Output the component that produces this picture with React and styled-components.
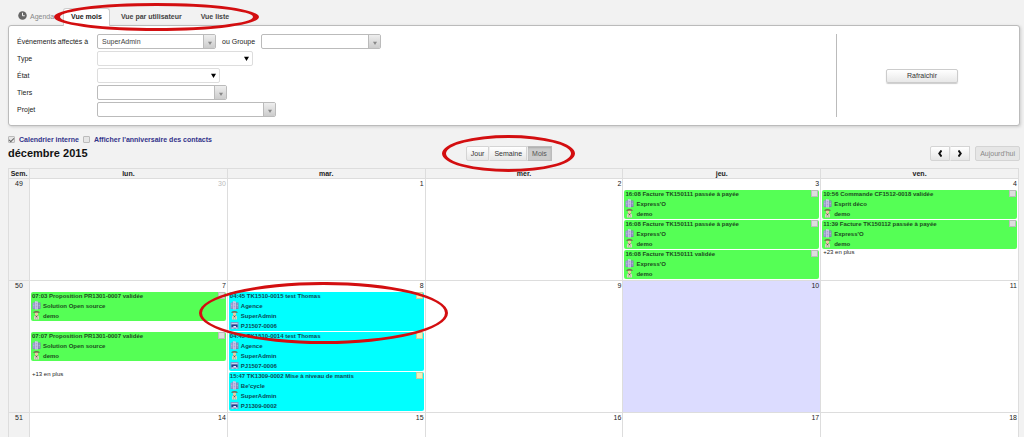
import React from 'react';
import styled, { createGlobalStyle, css } from 'styled-components';

const GlobalStyle = createGlobalStyle`
  * {
    box-sizing: border-box;
  }

  body {
    margin: 0;
    background-color: #f2f2f2;
    color: #222222;
    font-family: 'Liberation Sans', Arial, sans-serif;
    font-size: 7px;
    line-height: 10px;
  }

  button, select, input {
    margin: 0;
    font-family: inherit;
    font-size: inherit;
    line-height: inherit;
  }
`;

const Page = styled.main`
  padding: 8px 4px 0 8px;
`;

const Tabs = styled.nav`
  position: relative;
  z-index: 1;
  display: flex;
  align-items: center;
  gap: 3px;
  margin-bottom: -1px;
  padding-left: 10px;
`;

const TabsTitle = styled.span`
  display: flex;
  align-items: center;
  gap: 3px;
  width: 42px;
  color: #888888;

  svg {
    width: 9px;
    height: 9px;
    margin-bottom: 3px;
  }
`;

const Tab = styled.a`
  height: 18px;
  padding: 3px 7px;
  border: 1px solid transparent;
  border-bottom: 0;
  border-radius: 3px 3px 0 0;
  color: #444444;
  font-weight: bold;
  text-decoration: none;

  ${({ $active }) =>
    $active &&
    css`
      background-color: #ffffff;
      border-color: #cccccc;
      color: #222222;
    `}
`;

const Panel = styled.form`
  display: flex;
  padding: 8px 12px 8px 8px;
  background-color: #ffffff;
  border: 1px solid #bbbbbb;
  border-radius: 3px;
  box-shadow: 1px 1px 3px #cccccc;
`;

const Fields = styled.div`
  flex: 1;
  display: flex;
  flex-direction: column;
  gap: 2px;
`;

const Field = styled.div`
  display: flex;
  align-items: center;
  height: 15px;
`;

const Label = styled.label`
  width: 80px;
`;

const GroupLabel = styled.label`
  padding: 0 6px;
`;

const SelectBox = styled.span`
  display: flex;
  width: ${({ $width }) => $width}px;
  height: 15px;
  background-color: #ffffff;
  border: 1px solid ${({ $plain }) => ($plain ? '#dddddd' : '#bbbbbb')};
  border-radius: 2px;
  overflow: hidden;
`;

const SelectInput = styled.select`
  flex: 1;
  min-width: 0;
  padding: 0 4px;
  appearance: none;
  background: transparent;
  border: 0;
  color: #444444;
`;

const Arrow = styled.span`
  display: flex;
  align-items: center;
  justify-content: center;
  width: 12px;
  pointer-events: none;

  ${({ $plain }) =>
    !$plain &&
    css`
      padding-top: 3px;
      background: linear-gradient(#eeeeee, #cccccc);
      border-left: 1px solid #bbbbbb;
    `}

  svg {
    width: ${({ $plain }) => ($plain ? 5 : 4)}px;
    height: ${({ $plain }) => ($plain ? 5 : 4)}px;
    fill: ${({ $plain }) => ($plain ? '#000000' : '#888888')};
  }
`;

const Actions = styled.div`
  display: flex;
  align-items: center;
  justify-content: center;
  width: 171px;
  border-left: 1px solid #bbbbbb;
`;

const RefreshButton = styled.button`
  width: 72px;
  height: 14px;
  padding: 0;
  background: linear-gradient(#ffffff, #e8e8e8);
  border: 1px solid #cccccc;
  border-radius: 2px;
  box-shadow: 0 1px 1px #cccccc;
  color: #333333;
`;

const Options = styled.div`
  display: flex;
  align-items: center;
  gap: 4px;
  margin-top: 9px;
`;

const OptionLabel = styled.label`
  color: #33338a;
  font-weight: bold;
`;

const CheckBox = styled.input`
  display: grid;
  place-items: center;
  width: 7px;
  height: 7px;
  margin-bottom: 2px;
  appearance: none;
  background-color: #e6e6e6;
  border: 1px solid #bbbbbb;
  border-radius: 1px;

  &:checked::after {
    content: '';
    width: 2px;
    height: 4px;
    border: solid #666666;
    border-width: 0 1px 1px 0;
    transform: rotate(45deg);
  }
`;

const Toolbar = styled.div`
  display: flex;
  align-items: center;
  justify-content: space-between;
  margin: 1px 0 7px;
`;

const Title = styled.h2`
  margin: 0;
  color: #111111;
  font-size: 11px;
  line-height: 13px;
`;

const ButtonGroup = styled.div`
  position: relative;
  display: flex;
`;

const ToolButton = styled.button`
  display: flex;
  align-items: center;
  height: 15px;
  padding: 0 ${({ $icon }) => ($icon ? 7 : 4)}px;
  background: linear-gradient(#ffffff, #e6e6e6);
  border: 1px solid #d4d4d4;
  color: #333333;

  & + & {
    border-left-color: #eeeeee;
  }

  &:first-child {
    border-radius: 2px 0 0 2px;
  }

  &:last-child {
    border-radius: 0 2px 2px 0;
  }

  ${({ $active }) =>
    $active &&
    css`
      background: #cccccc;
      border-color: #bbbbbb;
      box-shadow: inset 0 1px 2px #aaaaaa;
      color: #555555;
    `}

  &&:disabled {
    margin-left: 5px;
    background: #e6e6e6;
    border: 1px solid #d4d4d4;
    border-radius: 2px;
    color: #888888;
  }

  svg {
    width: 4px;
    height: 7px;
    fill: none;
    stroke: #111111;
    stroke-width: 2;
  }
`;

const Calendar = styled.table`
  width: calc(100% - 1px);
  table-layout: fixed;
  border-collapse: separate;
  border-spacing: 0;
  border-left: 1px solid #dddddd;
`;

const WeekColumn = styled.col`
  width: 21px;
`;

const HeadCell = styled.th`
  height: 10px;
  padding: 0;
  border-top: 1px solid #dddddd;
  border-right: 1px solid #dddddd;
  line-height: 9px;
`;

const WeekCell = styled.th`
  padding: 0;
  border-top: 1px solid #dddddd;
  border-right: 1px solid #dddddd;
  font-weight: normal;
  vertical-align: top;
`;

const DayCell = styled.td`
  height: 25px;
  padding: 0;
  background-color: ${({ $today }) => ($today ? '#dcdcff' : '#ffffff')};
  border-top: 1px solid #dddddd;
  border-right: 1px solid #dddddd;
  vertical-align: top;
`;

const DayNumber = styled.div`
  height: 11px;
  padding-right: 1px;
  color: ${({ $other }) => ($other ? '#bbbbbb' : '#222222')};
  text-align: right;
`;

const Events = styled.div`
  display: grid;
  grid-auto-rows: ${({ $slot }) => $slot}px;
  align-items: start;
  padding: 0 1px;
`;

const EventCard = styled.article`
  position: relative;
  padding: 0 1px;
  background-color: ${({ $task }) => ($task ? '#00ffff' : '#55ff55')};
  border-radius: 2px;
  color: ${({ $task }) => ($task ? '#0c4a55' : '#1c4c1e')};
  font-size: 6px;
  font-weight: bold;
`;

const EventHead = styled.div`
  display: flex;
  justify-content: space-between;
  height: 9px;
  line-height: 9px;
`;

const EventLine = styled.div`
  display: flex;
  align-items: center;
  gap: 2px;
  height: 10px;

  svg {
    width: 9px;
    height: 9px;
    margin-bottom: 2px;
  }
`;

const Swatch = styled.span`
  width: 7px;
  height: 7px;
  background-color: ${({ $task }) => ($task ? '#eeeebb' : '#dddddd')};
  border: 1px solid ${({ $task }) => ($task ? '#c4cfa0' : '#bbbbbb')};
`;

const MoreLink = styled.a`
  padding-left: 1px;
  color: #222222;
  font-size: 6px;
  line-height: 5px;
  text-decoration: none;
`;

const Ring = styled.svg`
  position: absolute;
  z-index: 2;
  top: ${({ $top }) => $top}px;
  left: ${({ $left }) => $left}px;
  fill: #d30e10;
  pointer-events: none;
`;

const ellipse = (cx, cy, rx, ry) =>
  `M${cx - rx} ${cy}a${rx} ${ry} 0 1 0 ${rx * 2} 0a${rx} ${ry} 0 1 0 ${-rx * 2} 0z`;

// Hand-drawn style ring, thicker on the sides than on the top and bottom
const Highlight = ({ width, height, side, edge, top, left }) => (
  <Ring $top={top} $left={left} width={width} height={height} aria-hidden="true">
    <path
      fillRule="evenodd"
      d={
        ellipse(width / 2, height / 2, width / 2, height / 2) +
        ellipse(width / 2, height / 2, width / 2 - side, height / 2 - edge)
      }
    />
  </Ring>
);

const ClockIcon = () => (
  <svg viewBox="0 0 18 18" aria-hidden="true">
    <circle cx="9" cy="9" r="8.5" fill="#666666" />
    <path d="M9 3.5V9.5H13.5" fill="none" stroke="#f2f2f2" strokeWidth="2" />
  </svg>
);

const CompanyIcon = () => (
  <svg viewBox="0 0 18 18" aria-hidden="true">
    <path d="M1 4l5-2v14H1z" fill="#8f8fc8" />
    <path d="M6 0l6 1v16H6z" fill="#c9c3e6" />
    <path d="M12 3h5v13h-5z" fill="#7f7fb0" />
    <path d="M2 6h3M2 9h3M2 12h3M13 6h3M13 9h3M13 12h3" stroke="#d9d9f2" strokeWidth="1" />
    <path d="M7.500 5h3M7.500 8h3M7.500 11h3M7.500 14h3" stroke="#8080b4" strokeWidth="1" />
  </svg>
);

const UserIcon = () => (
  <svg viewBox="0 0 18 18" aria-hidden="true">
    <path d="M4 17V11q0-2 3-2h4q3 0 3 2v6z" fill="#d8d3c4" />
    <path d="M6 8h6l-3 5z" fill="#5e4c42" />
    <path d="M6 3h6v4q-1 3-3 3T6 7z" fill="#ecc9a0" />
    <path d="M3 4V2q2-2 6-2t6 2v2q-3-1-6-1T3 4z" fill="#7b6254" />
    <path d="M7 12v5M11 12v5" stroke="#a8a294" />
  </svg>
);

const ProjectIcon = () => (
  <svg viewBox="0 0 18 18" aria-hidden="true">
    <rect x="1" y="2" width="16" height="14" rx="1" fill="#7c9ace" />
    <path d="M3 4h12v3H3z" fill="#c6d3ea" />
    <path d="M3 7h12v6h-3v-3H7v3H3z" fill="#24408a" />
    <path d="M7 10h5v3H7zM3 13h4v2H3zM12 13h3v2h-3z" fill="#e6eef8" />
  </svg>
);

const ChevronLeft = () => (
  <svg viewBox="0 0 4 7" aria-hidden="true">
    <path d="M3.500 .5L1.300 3.500 3.500 6.500" />
  </svg>
);

const ChevronRight = () => (
  <svg viewBox="0 0 4 7" aria-hidden="true">
    <path d="M.5 .5L2.700 3.500 .5 6.500" />
  </svg>
);

const Select = ({ id, width, plain, value = '' }) => (
  <SelectBox $width={width} $plain={plain}>
    <SelectInput id={id} defaultValue={value}>
      <option value={value}>{value}</option>
    </SelectInput>
    <Arrow $plain={plain}>
      <svg viewBox="0 0 6 6" aria-hidden="true">
        <path d="M0 1h6L3 6z" />
      </svg>
    </Arrow>
  </SelectBox>
);

const Event = ({ title, company, user, project, ringed }) => (
  <EventCard $task={Boolean(project)}>
    <EventHead>
      {title}
      <Swatch $task={Boolean(project)} />
    </EventHead>
    <EventLine>
      <CompanyIcon />
      {company}
    </EventLine>
    <EventLine>
      <UserIcon />
      {user}
    </EventLine>
    {project && (
      <EventLine>
        <ProjectIcon />
        {project}
      </EventLine>
    )}
    {ringed && <Highlight width={249} height={62} side={3} edge={3} top={-10} left={-30} />}
  </EventCard>
);

const days = ['lun.', 'mar.', 'mer.', 'jeu.', 'ven.'];

const weeks = [
  {
    number: 49,
    slot: 30,
    days: [
      { day: 30, other: true },
      { day: 1 },
      { day: 2 },
      {
        day: 3,
        events: [
          { title: '16:08 Facture TK150111 passée à payée', company: "Express'O", user: 'demo' },
          { title: '16:08 Facture TK150111 passée à payée', company: "Express'O", user: 'demo' },
          { title: '16:08 Facture TK150111 validée', company: "Express'O", user: 'demo' },
        ],
      },
      {
        day: 4,
        events: [
          { title: '10:56 Commande CF1512-0018 validée', company: 'Esprit déco', user: 'demo' },
          { title: '11:39 Facture TK150112 passée à payée', company: "Express'O", user: 'demo' },
        ],
        more: 23,
      },
    ],
  },
  {
    number: 50,
    slot: 40,
    days: [
      {
        day: 7,
        events: [
          { title: '07:03 Proposition PR1301-0007 validée', company: 'Solution Open source', user: 'demo' },
          { title: '07:07 Proposition PR1301-0007 validée', company: 'Solution Open source', user: 'demo' },
        ],
        more: 13,
      },
      {
        day: 8,
        events: [
          {
            title: '04:45 TK1510-0015 test Thomas',
            company: 'Agence',
            user: 'SuperAdmin',
            project: 'PJ1507-0006',
            ringed: true,
          },
          { title: '04:45 TK1510-0014 test Thomas', company: 'Agence', user: 'SuperAdmin', project: 'PJ1507-0006' },
          {
            title: '15:47 TK1309-0002 Mise à niveau de mantis',
            company: "Be'cycle",
            user: 'SuperAdmin',
            project: 'PJ1309-0002',
          },
        ],
      },
      { day: 9 },
      { day: 10, today: true },
      { day: 11 },
    ],
  },
  {
    number: 51,
    slot: 30,
    days: [{ day: 14 }, { day: 15 }, { day: 16 }, { day: 17 }, { day: 18 }],
  },
];

const Day = ({ day, other, today, events = [], more, slot }) => (
  <DayCell $today={today}>
    <DayNumber $other={other}>{day}</DayNumber>
    <Events $slot={slot}>
      {events.map((event, index) => (
        <Event key={index} {...event} />
      ))}
      {more && <MoreLink href="#more">+{more} en plus</MoreLink>}
    </Events>
  </DayCell>
);

const App = () => {
  return (
    <>
      <GlobalStyle />
      <Page>
        <Tabs>
          <TabsTitle>
            <ClockIcon />
            Agenda
          </TabsTitle>
          <Tab href="#mois" $active>
            Vue mois
          </Tab>
          <Tab href="#utilisateur">Vue par utilisateur</Tab>
          <Tab href="#liste">Vue liste</Tab>
          <Highlight width={205} height={28} side={6} edge={3} top={-5} left={46} />
        </Tabs>

        <Panel onSubmit={(e) => e.preventDefault()}>
          <Fields>
            <Field>
              <Label htmlFor="user">Événements affectés à</Label>
              <Select id="user" width={119} value="SuperAdmin" />
              <GroupLabel htmlFor="group">ou Groupe</GroupLabel>
              <Select id="group" width={120} />
            </Field>
            <Field>
              <Label htmlFor="type">Type</Label>
              <Select id="type" width={156} plain />
            </Field>
            <Field>
              <Label htmlFor="state">État</Label>
              <Select id="state" width={123} plain />
            </Field>
            <Field>
              <Label htmlFor="company">Tiers</Label>
              <Select id="company" width={130} />
            </Field>
            <Field>
              <Label htmlFor="project">Projet</Label>
              <Select id="project" width={179} />
            </Field>
          </Fields>
          <Actions>
            <RefreshButton type="submit">Rafraichir</RefreshButton>
          </Actions>
        </Panel>

        <Options>
          <CheckBox type="checkbox" id="internal" defaultChecked />
          <OptionLabel htmlFor="internal">Calendrier interne</OptionLabel>
          <CheckBox type="checkbox" id="birthday" />
          <OptionLabel htmlFor="birthday">Afficher l'anniversaire des contacts</OptionLabel>
        </Options>

        <Toolbar>
          <Title>décembre 2015</Title>
          <ButtonGroup>
            <ToolButton type="button">Jour</ToolButton>
            <ToolButton type="button">Semaine</ToolButton>
            <ToolButton type="button" $active>
              Mois
            </ToolButton>
            <Highlight width={133} height={37} side={4} edge={3} top={-11} left={-24} />
          </ButtonGroup>
          <ButtonGroup>
            <ToolButton type="button" aria-label="Précédent" $icon>
              <ChevronLeft />
            </ToolButton>
            <ToolButton type="button" aria-label="Suivant" $icon>
              <ChevronRight />
            </ToolButton>
            <ToolButton type="button" disabled>
              Aujourd'hui
            </ToolButton>
          </ButtonGroup>
        </Toolbar>

        <Calendar>
          <colgroup>
            <WeekColumn />
            {days.map((day) => (
              <col key={day} />
            ))}
          </colgroup>
          <thead>
            <tr>
              <HeadCell scope="col">Sem.</HeadCell>
              {days.map((day) => (
                <HeadCell key={day} scope="col">
                  {day}
                </HeadCell>
              ))}
            </tr>
          </thead>
          <tbody>
            {weeks.map((week) => (
              <tr key={week.number}>
                <WeekCell scope="row">{week.number}</WeekCell>
                {week.days.map((day) => (
                  <Day key={day.day} slot={week.slot} {...day} />
                ))}
              </tr>
            ))}
          </tbody>
        </Calendar>
      </Page>
    </>
  );
};

export default App;
